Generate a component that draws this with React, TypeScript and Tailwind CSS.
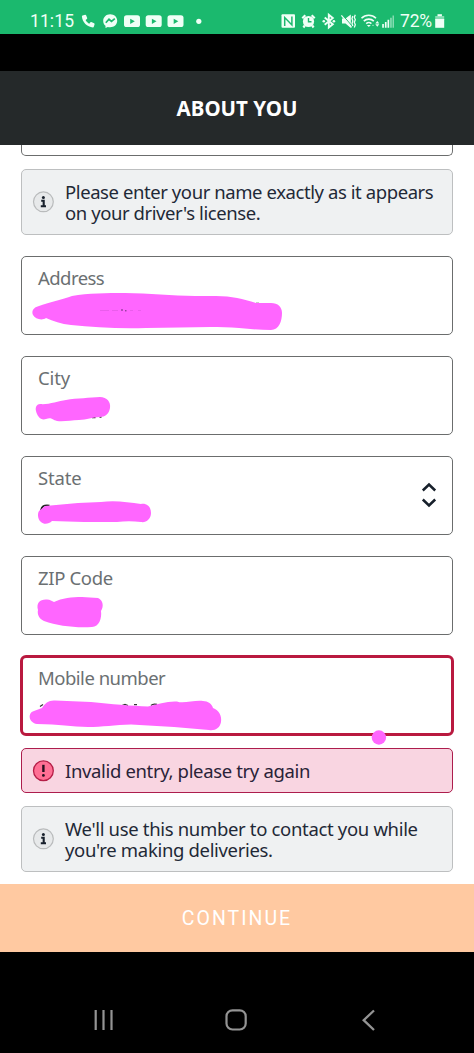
import type { ReactNode } from "react";

const PINK = "#ff66ff";

function StatusBar() {
  return (
    <div className="flex h-[34px] shrink-0 items-start bg-[#1bb96e] text-[#effff6]">
      <span className="ml-[30px] mt-[11px] w-[46px] whitespace-nowrap font-[Roboto,sans-serif] text-[17.5px] leading-[21px] tracking-[0.1px]">
        11:15
      </span>
      <svg className="h-[34px] w-[140px]" viewBox="76 0 140 34" fill="currentColor">
        <path d="M82.6 15.600l2.500-.9c.4-.1.8.1 1 .5l1.100 2.800c.1.4 0 .7-.3 1l-1.300 1.100c.8 1.600 2 2.800 3.600 3.600l1.100-1.300c.3-.3.600-.4 1-.3l2.800 1.100c.4.200.600.600.5 1l-.8 2.600c-.1.400-.400.600-.8.600-6-.300-10.700-5-11.100-11.100 0-.3.300-.5.700-.7z" />
        <path d="M110.200 14.300c-4 0-7 2.900-7 6.600 0 2 .9 3.700 2.300 4.900v2.300l2.300-1.100c.7.200 1.600.3 2.400.3 4 0 7-2.800 7-6.500s-3-6.500-7-6.500z" />
        <path d="M105.800 22.800l3.200-3.500 2.500 2.200 3.300-2.800" fill="none" stroke="#1bb96e" strokeWidth="1.700" />
        {[124, 145.700, 167.500].map((x) => (
          <g key={x}>
            <rect x={x} y="15.200" width="16" height="11.900" rx="2.600" />
            <path d={`M${x + 6.200} 18.700v5.200l4.600-2.600z`} fill="#1bb96e" />
          </g>
        ))}
        <circle cx="198.800" cy="21.300" r="2.600" />
      </svg>
      <svg className="ml-[60px] h-[34px] w-[122px]" viewBox="276 0 122 34" fill="currentColor">
        <rect x="281.500" y="14.300" width="13.500" height="13.500" rx="1" />
        <path d="M284.700 26v-8.500l7.200 7.500v-8.500" fill="none" stroke="#1bb96e" strokeWidth="1.500" />
        <circle cx="308.500" cy="21.500" r="5.600" />
        <path d="M302.300 18.300l3-3M314.700 18.300l-3-3M304.800 25.500l-1.400 2M312.200 25.500l1.400 2" stroke="currentColor" strokeWidth="2.200" />
        <path d="M308.500 18v3.800h3" fill="none" stroke="#1bb96e" strokeWidth="1.400" />
        <path d="M324.700 17.600l8.100 6.600-4 3.200V14.800l4 3.300-8.100 6.600" fill="none" stroke="currentColor" strokeWidth="1.900" />
        <circle cx="323.800" cy="21.200" r="1.300" />
        <circle cx="333.900" cy="21.200" r="1.300" />
        <path d="M342 18.400h3.500l5.300-4v13.600l-5.300-4.400H342z" />
        <path d="M342.200 14.600l10 11.600" stroke="#1bb96e" strokeWidth="1" />
        <path d="M341.400 15.400l10.200 12" stroke="currentColor" strokeWidth="1.300" />
        <path d="M352.800 16l-.8 2.500.8 2.500-.8 2.500.8 2.500M355.300 14.700l-1 2.500 1 2.500-1 2.500 1 2.500-1 2.800" fill="none" stroke="currentColor" strokeWidth="1.300" />
        <path d="M361.500 18.300c4-4 10.500-4 14.500 0M363.800 21.100c2.800-2.700 7.200-2.700 10 0M366.200 23.700c1.500-1.400 3.700-1.400 5.200 0" fill="none" stroke="currentColor" strokeWidth="1.600" />
        <path d="M366.800 25h4l-2 2z" />
        <path d="M373 24.300l1.200 1.700h-2.400z" opacity=".5" />
        <path d="M377.300 21l2 2.600h-4zM377.300 26.700l2-2.400h-4z" />
        <path d="M382.200 24h1.700v3.700h-1.700zM384.900 22h1.700v5.700h-1.700zM387.500 19.800h1.700v7.900h-1.700z" />
        <path d="M390.100 17.700h1.700v10h-1.700zM392.500 15.500h1.500v12.200h-1.500z" opacity=".5" />
      </svg>
      <span className="ml-[2px] mt-[11px] w-[34px] whitespace-nowrap font-[Roboto,sans-serif] text-[17.5px] leading-[21px] tracking-[-0.2px]">
        72%
      </span>
      <svg className="h-[34px] w-[14px]" viewBox="434 0 14 34" fill="currentColor">
        <rect x="437.500" y="14.200" width="4.400" height="2" />
        <path d="M435.200 16h9v4h-9z" opacity=".5" />
        <path d="M435.200 19h9v8.800h-9z" />
      </svg>
    </div>
  );
}

function Field({ label, labelClass, children }: { label: string; labelClass: string; children?: ReactNode }) {
  return (
    <div className="relative mb-[21px] h-[79px] rounded-[5px] border border-[#6b6d6d] pl-[16px] pt-[9px]">
      <div className={`whitespace-nowrap text-[18.5px] leading-[24px] text-[#6b7072] ${labelClass}`}>{label}</div>
      {children}
    </div>
  );
}

function Scribble({ d, children }: { d: string; children?: ReactNode }) {
  return (
    <svg className="pointer-events-none absolute -left-px -top-px h-[79px] w-[432px] overflow-visible" viewBox="0 0 432 79">
      {children}
      <path d={d} fill={PINK} />
    </svg>
  );
}

function InfoIcon() {
  return (
    <svg className="h-[22px] w-[22px] shrink-0" viewBox="0 0 22 22">
      <circle cx="11.400" cy="10.800" r="9.900" fill="#e7e9ea" stroke="#b9bbbc" strokeWidth="1.200" />
      <circle cx="11.400" cy="6.600" r="1.500" fill="#18202c" />
      <path d="M9.200 9.700h2.500v5.400M8.800 15.300h5.200" fill="none" stroke="#18202c" strokeWidth="2.100" />
    </svg>
  );
}

function Notice({ textClass, children }: { textClass: string; children: ReactNode }) {
  return (
    <div className="flex h-[66px] items-center rounded-[5px] border border-[#bdbfc0] bg-[#eff1f2] pl-[10px] text-[18.5px] leading-[21px] text-[#1f2937]">
      <InfoIcon />
      <p className={`ml-[11px] whitespace-nowrap ${textClass}`}>{children}</p>
    </div>
  );
}

export default function App() {
  return (
    <div className="flex h-[1053px] w-[474px] flex-col overflow-hidden bg-black font-['Noto_Sans',sans-serif]">
      <StatusBar />
      <header className="mt-[37px] flex h-[74px] shrink-0 items-center justify-center bg-[#25292a] text-[20.5px] font-bold text-white">
        <h1 className="whitespace-nowrap">ABOUT YOU</h1>
      </header>
      <main className="h-[739px] shrink-0 overflow-hidden bg-white px-[21px]">
        <div className="h-[11px] rounded-b-[5px] border border-t-0 border-[#6b6d6d]" />
        <div className="mb-[21px] mt-[13px]">
          <Notice textClass="tracking-[-0.42px]">
            Please enter your name exactly as it appears
            <br />
            on your driver's license.
          </Notice>
        </div>
        <Field label="Address" labelClass="tracking-[-0.55px]">
          <Scribble d="M18 50C27 47 42 43 51 40C67 37 86 37 104 37C128 37 151 40 174 40L195 40C211 40 222 43 235 47L250 47C257 47 261 51 261 57C261 65 258 74 250 74C240 74 229 73 218 72C190 70 160 72 125 72C97 73 72 71 50 69C40 68 32 65 25 62C21 65 14 63 12 59C10 55 13 51 18 50Z">
            <path d="M235 47.500h3" stroke="#333" strokeWidth="1.500" />
          </Scribble>
          <svg className="absolute -left-px -top-px h-[79px] w-[432px]" viewBox="0 0 432 79">
            <path d="M79 54.500h9M91 54.500h6M109 54.500h3M117 54.500h3" stroke="#dc58df" strokeWidth=".6" />
            <path d="M100 54h2M104 54.800h1.500" stroke="#6b2f78" strokeWidth="1" />
          </svg>
        </Field>
        <Field label="City" labelClass="tracking-[-0.1px]">
          <Scribble d="M19 48C27 49 37 45 45 44C56 42 69 42 79 41C86 41 90 46 89 52C88 58 84 61 79 61C71 61 66 64 58 64C50 64 43 66 36 65C31 64 31 61 25 63C20 65 16 60 15 55C14 51 16 48 19 48Z">
            <path d="M71 61.700h3.500M78.500 61h2" stroke="#333" strokeWidth="1.300" />
          </Scribble>
        </Field>
        <Field label="State" labelClass="tracking-[-0.15px]">
          <Scribble d="M24 50L57 47L80 46C93 44 107 46 120 48C126 47 130 51 130 57C130 63 125 67 120 66C112 65 104 65 96 66C75 66 51 66 31 65C28 68 23 69 20 66C17 64 16 58 18 55Z">
            <path d="M19.800 56C20 50.500 23 48.500 28.500 49.500" fill="none" stroke="#222" strokeWidth="1.700" />
          </Scribble>
          <svg className="absolute right-[15px] top-[25px] h-[26px] w-[16px]" viewBox="0 0 16 26" fill="none" stroke="#17202b" strokeWidth="2.500">
            <path d="M1.800 8.500L8 2.500L14.200 8.500M1.800 17.500L8 23.500L14.200 17.500" />
          </svg>
        </Field>
        <Field label="ZIP Code" labelClass="tracking-[-0.35px]">
          <Scribble d="M26 43.500C29 43.500 31 45 33 46C41 42 51 41 61 41L77 42C82 44 83 50 80 55C81 62 78 71 71 71C54 72 37 70 23 65C18 63 16 58 17 54C15 47 19 43 26 43.500Z" />
        </Field>
        <div className="relative -mx-px -mt-px h-[81px] rounded-[6px] border-[3px] border-[#b9193f] pl-[15px] pt-[8px]">
          <div className="whitespace-nowrap text-[18.5px] leading-[24px] tracking-[-0.5px] text-[#6b7072]">Mobile number</div>
          <svg className="pointer-events-none absolute -left-[3px] -top-[3px] h-[81px] w-[434px] overflow-visible" viewBox="20 655 434 81">
            <path d="M40 706.500l3-2M122 705.500l3-1 3 1M134 704.700h3M151 705.500q2-2 6-1" stroke="#333" strokeWidth="1.300" fill="none" />
            <path d="M42 708C45 703 49 700 55 700.500L91 702C111 704 132 706 148 706.500C158 704 167 701 177 701.500C183 704 194 700 203 701C208 701 212 704 213 708C219 710 222 716 221 722C220 728 215 731 209 730L174 727L131 724.500C115 725 102 727 88 727C72 727 59 724 37 724C29 723 27 713 34 711Z" fill={PINK} />
            <circle cx="378.900" cy="737.500" r="7.200" fill={PINK} />
          </svg>
        </div>
        <div className="mb-[13px] mt-[12px] flex h-[45px] items-center rounded-[5px] border border-[#ad1d4d] bg-[#f9d5e1] pl-[10px] text-[18.5px] text-[#2a2338]">
          <svg className="h-[22px] w-[22px] shrink-0" viewBox="0 0 22 22">
            <circle cx="11.400" cy="10.800" r="9.900" fill="#ff6f94" stroke="#b51e47" strokeWidth="1.300" />
            <path d="M11.400 4.800v7.200" stroke="#25101e" strokeWidth="2.400" />
            <circle cx="11.400" cy="15.400" r="1.400" fill="#25101e" />
          </svg>
          <span className="ml-[11px] whitespace-nowrap tracking-[-0.35px]">Invalid entry, please try again</span>
        </div>
        <Notice textClass="tracking-[-0.33px]">
          We'll use this number to contact you while
          <br />
          you're making deliveries.
        </Notice>
      </main>
      <button className="flex h-[68px] shrink-0 items-center justify-center bg-[#ffc9a1] pt-[2px] font-[Roboto,sans-serif] text-[19.5px] tracking-[2px] text-white">
        CONTINUE
      </button>
      <nav className="flex h-[101px] shrink-0 items-start pt-[56px]">
        <svg className="ml-[92px] h-[24px] w-[24px]" viewBox="0 0 24 24" stroke="#949494" strokeWidth="2.200">
          <path d="M3.700 2v20M11.500 2v20M19.500 2v20" />
        </svg>
        <svg className="ml-[108px] h-[24px] w-[24px]" viewBox="0 0 24 24" fill="none" stroke="#949494" strokeWidth="2.200">
          <rect x="2.500" y="2.300" width="19.200" height="19.200" rx="6" />
        </svg>
        <svg className="ml-[108px] h-[24px] w-[24px]" viewBox="0 0 24 24" fill="none" stroke="#949494" strokeWidth="2.300">
          <path d="M18 2.500L7.700 12.200L18 22" />
        </svg>
      </nav>
    </div>
  );
}
